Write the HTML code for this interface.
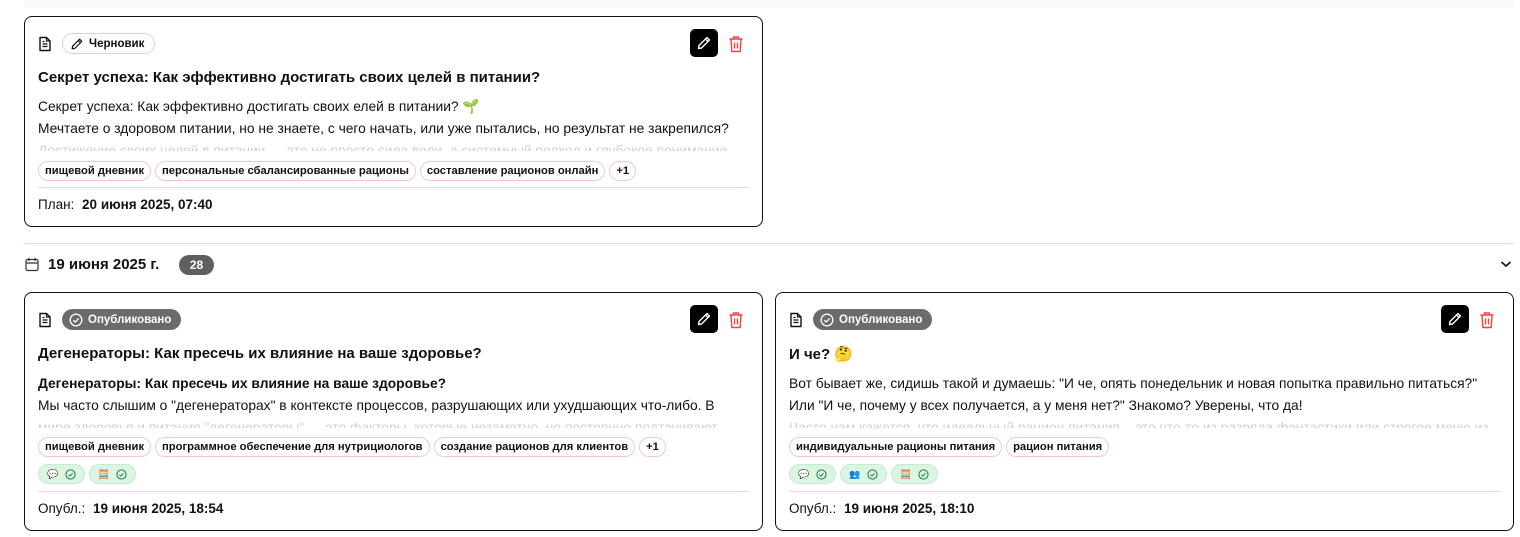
<!DOCTYPE html>
<html><head><meta charset="utf-8">
<style>
*{box-sizing:border-box;margin:0;padding:0}
body{width:1520px;height:537px;background:#fff;font-family:"Liberation Sans","Noto Sans CJK SC",sans-serif;color:#111;position:relative;overflow:hidden}
.strip{position:absolute;left:24px;top:0;width:1490px;height:8px;background:#f8f9fa}
.card{position:absolute;border:1px solid #111;border-radius:8px;background:#fff}
.abs{position:absolute}
.doc{position:absolute;left:13px;width:14px;height:16px}
.badge{position:absolute;height:21px;border-radius:11px;font-size:11.5px;font-weight:bold;display:flex;align-items:center;padding:0 10px 0 7px;gap:5px;white-space:nowrap}
.draft{border:1px solid #f6c6d3;color:#111}
.pub{background:#6b6b6b;color:#fff}
.edit{position:absolute;width:28px;height:28px;background:#000;border-radius:5px;display:flex;align-items:center;justify-content:center}
.del{position:absolute;width:16px;height:18px}
.title{position:absolute;left:13px;font-size:15px;font-weight:bold;white-space:nowrap}
.body{position:absolute;left:13px;right:13px;font-size:13.8px;line-height:22px;height:55px;overflow:hidden;white-space:nowrap}
.body .f{color:#d0d0d0}
.tags{position:absolute;left:13px;display:flex;gap:4px}
.tag{height:20px;border:1px solid #f6c6d3;border-radius:10px;font-size:11.2px;font-weight:bold;padding:0 6px;display:flex;align-items:center;white-space:nowrap}
.chips{position:absolute;left:13px;display:flex;gap:4px}
.chip{height:20px;width:47px;background:#dcf5e3;border:1px solid #c3ecd0;border-radius:10px;display:flex;align-items:center;justify-content:center;gap:6px;font-size:9px}
.line{position:absolute;left:13px;right:13px;height:1px;background:#f3d3dc}
.foot{position:absolute;left:13px;font-size:13.5px;white-space:nowrap}
.foot b{margin-left:4px}
</style></head><body>
<div class="strip"></div>

<svg width="0" height="0" style="position:absolute">
<defs>
<symbol id="doc" viewBox="0 0 14 16"><path d="M2 1.5h6.5L12 5v9.5H2z" fill="none" stroke="#111" stroke-width="1.4" stroke-linejoin="round"/><path d="M8.5 1.5V5H12M4.5 8h5M4.5 10.5h5M4.5 5.5h2" stroke="#111" stroke-width="1.2" fill="none"/></symbol>
<symbol id="pen" viewBox="0 0 16 16"><path d="M11 2.5l2.5 2.5L5.5 13 2.5 13.5 3 10.5z M9.5 4l2.5 2.5" fill="none" stroke="currentColor" stroke-width="1.4" stroke-linejoin="round"/></symbol>
<symbol id="trash" viewBox="0 0 16 18"><path d="M1.5 4h13M5.5 4V2h5v2M3 4l.8 12.5h8.4L13 4M6.5 7.5v6M9.5 7.5v6" fill="none" stroke="#ef4444" stroke-width="1.4" stroke-linejoin="round"/></symbol>
<symbol id="chk" viewBox="0 0 12 12"><circle cx="6" cy="6" r="5" fill="none" stroke="currentColor" stroke-width="1.1"/><path d="M3.7 6.2l1.6 1.5 3-3" fill="none" stroke="currentColor" stroke-width="1.1"/></symbol>
</defs></svg>

<!-- Card 1 -->
<div class="card" style="left:24px;top:16px;width:739px;height:211px">
  <svg class="doc" style="top:19px"><use href="#doc"/></svg>
  <div class="badge draft" style="left:37px;top:16px"><svg width="14" height="14" style="color:#111"><use href="#pen"/></svg>Черновик</div>
  <div class="edit" style="left:665px;top:12px"><svg width="16" height="16" style="color:#fff"><use href="#pen"/></svg></div>
  <svg class="del" style="left:703px;top:18px"><use href="#trash"/></svg>
  <div class="title" style="top:52px">Секрет успеха: Как эффективно достигать своих целей в питании?</div>
  <div class="body" style="top:79px">Секрет успеха: Как эффективно достигать своих елей в питании? 🌱<br>Мечтаете о здоровом питании, но не знаете, с чего начать, или уже пытались, но результат не закрепился?<br><span class="f">Достижение своих целей в питании — это не просто сила воли, а системный подход и глубокое понимание</span></div>
  <div class="tags" style="top:144px"><div class="tag">пищевой дневник</div><div class="tag">персональные сбалансированные рационы</div><div class="tag">составление рационов онлайн</div><div class="tag">+1</div></div>
  <div class="line" style="top:170px"></div>
  <div class="foot" style="top:180px">План: <b>20 июня 2025, 07:40</b></div>
</div>

<div class="abs" style="left:24px;top:243px;width:1490px;height:1px;background:#f3d3dc"></div>
<svg class="abs" style="left:25px;top:257px" width="14" height="15" viewBox="0 0 14 15"><rect x="1" y="2.5" width="12" height="11" rx="1.5" fill="none" stroke="#333" stroke-width="1.2"/><path d="M1 6h12M4 1v3M10 1v3" stroke="#333" stroke-width="1.2"/></svg>
<div class="abs" style="left:48px;top:256px;font-size:15px;font-weight:bold">19 июня 2025 г.</div>
<div class="abs" style="left:179px;top:255px;width:35px;height:20px;border-radius:10px;background:#5f5f5f;color:#fff;font-size:12px;font-weight:bold;display:flex;align-items:center;justify-content:center">28</div>
<svg class="abs" style="left:1500px;top:260px" width="12" height="8" viewBox="0 0 12 8"><path d="M1.5 2l4.5 4 4.5-4" fill="none" stroke="#111" stroke-width="1.6"/></svg>

<!-- Card 2 -->
<div class="card" style="left:24px;top:292px;width:739px;height:239px">
  <svg class="doc" style="top:19px"><use href="#doc"/></svg>
  <div class="badge pub" style="left:37px;top:16px"><svg width="14" height="14" style="color:#fff"><use href="#chk"/></svg>Опубликовано</div>
  <div class="edit" style="left:665px;top:12px"><svg width="16" height="16" style="color:#fff"><use href="#pen"/></svg></div>
  <svg class="del" style="left:703px;top:18px"><use href="#trash"/></svg>
  <div class="title" style="top:52px">Дегенераторы: Как пресечь их влияние на ваше здоровье?</div>
  <div class="body" style="top:80px"><b style="font-weight:bold">Дегенераторы: Как пресечь их влияние на ваше здоровье?</b><br>Мы часто слышим о "дегенераторах" в контексте процессов, разрушающих или ухудшающих что-либо. В<br><span class="f">мире здоровья и питания "дегенераторы" — это факторы, которые незаметно, но постоянно подтачивают</span></div>
  <div class="tags" style="top:144px"><div class="tag">пищевой дневник</div><div class="tag">программное обеспечение для нутрициологов</div><div class="tag">создание рационов для клиентов</div><div class="tag">+1</div></div>
  <div class="chips" style="top:171px"><div class="chip"><span style="color:#c7b8e6">💬</span><svg width="11" height="11" style="color:#1f7a3a"><use href="#chk"/></svg></div><div class="chip"><span>🧮</span><svg width="11" height="11" style="color:#1f7a3a"><use href="#chk"/></svg></div></div>
  <div class="line" style="top:198px"></div>
  <div class="foot" style="top:208px">Опубл.: <b>19 июня 2025, 18:54</b></div>
</div>

<!-- Card 3 -->
<div class="card" style="left:775px;top:292px;width:739px;height:239px">
  <svg class="doc" style="top:19px"><use href="#doc"/></svg>
  <div class="badge pub" style="left:37px;top:16px"><svg width="14" height="14" style="color:#fff"><use href="#chk"/></svg>Опубликовано</div>
  <div class="edit" style="left:665px;top:12px"><svg width="16" height="16" style="color:#fff"><use href="#pen"/></svg></div>
  <svg class="del" style="left:703px;top:18px"><use href="#trash"/></svg>
  <div class="title" style="top:52px">И че? 🤔</div>
  <div class="body" style="top:80px">Вот бывает же, сидишь такой и думаешь: "И че, опять понедельник и новая попытка правильно питаться?"<br>Или "И че, почему у всех получается, а у меня нет?" Знакомо? Уверены, что да!<br><span class="f">Часто нам кажется, что идеальный рацион питания – это что-то из разряда фантастики или строгое меню из</span></div>
  <div class="tags" style="top:144px"><div class="tag">индивидуальные рационы питания</div><div class="tag">рацион питания</div></div>
  <div class="chips" style="top:171px"><div class="chip"><span style="color:#c7b8e6">💬</span><svg width="11" height="11" style="color:#1f7a3a"><use href="#chk"/></svg></div><div class="chip"><span>👥</span><svg width="11" height="11" style="color:#1f7a3a"><use href="#chk"/></svg></div><div class="chip"><span>🧮</span><svg width="11" height="11" style="color:#1f7a3a"><use href="#chk"/></svg></div></div>
  <div class="line" style="top:198px"></div>
  <div class="foot" style="top:208px">Опубл.: <b>19 июня 2025, 18:10</b></div>
</div>
</body></html>
